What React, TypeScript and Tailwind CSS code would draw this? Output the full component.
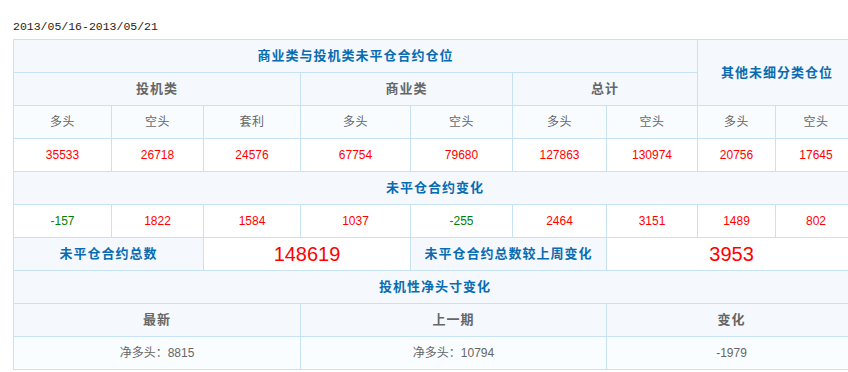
import React from 'react';

type Cell = {
    text: string;
    span?: number;
    rowSpan?: number;
    tone: 'title' | 'head' | 'label' | 'red' | 'green' | 'big' | 'plain';
    bg: 'head' | 'light' | 'white' | 'soft';
};

const bgClass = {
    head: 'bg-[#f5f9fe]',
    light: 'bg-[#f8fcff]',
    white: 'bg-white',
    soft: 'bg-[#fafdff]',
};

const toneClass = {
    title: 'text-[13px] font-bold tracking-[1px] text-[#0a6cb0]',
    head: 'text-[13px] font-bold tracking-[1px] text-[#666]',
    label: 'text-[12px] tracking-[0.5px] text-[#666]',
    red: 'text-[12px] text-[#ff0000]',
    green: 'text-[12px] text-[#008000]',
    big: 'text-[20px] text-[#ff0000]',
    plain: 'text-[12px] text-[#666]',
};

const num = (v: number): Cell => ({ text: String(v), tone: v < 0 ? 'green' : 'red', bg: 'white' });
const lab = (t: string): Cell => ({ text: t, tone: 'label', bg: 'light' });

const rows: Cell[][] = [
    [
        { text: '商业类与投机类未平仓合约仓位', span: 7, tone: 'title', bg: 'head' },
        { text: '其他未细分类仓位', span: 2, rowSpan: 2, tone: 'title', bg: 'head' },
    ],
    [
        { text: '投机类', span: 3, tone: 'head', bg: 'head' },
        { text: '商业类', span: 2, tone: 'head', bg: 'head' },
        { text: '总计', span: 2, tone: 'head', bg: 'head' },
    ],
    ['多头', '空头', '套利', '多头', '空头', '多头', '空头', '多头', '空头'].map(lab),
    [35533, 26718, 24576, 67754, 79680, 127863, 130974, 20756, 17645].map(num),
    [{ text: '未平仓合约变化', span: 9, tone: 'title', bg: 'head' }],
    [-157, 1822, 1584, 1037, -255, 2464, 3151, 1489, 802].map(num),
    [
        { text: '未平仓合约总数', span: 2, tone: 'title', bg: 'head' },
        { text: '148619', span: 2, tone: 'big', bg: 'white' },
        { text: '未平仓合约总数较上周变化', span: 2, tone: 'title', bg: 'head' },
        { text: '3953', span: 3, tone: 'big', bg: 'white' },
    ],
    [{ text: '投机性净头寸变化', span: 9, tone: 'title', bg: 'head' }],
    [
        { text: '最新', span: 3, tone: 'head', bg: 'head' },
        { text: '上一期', span: 3, tone: 'head', bg: 'head' },
        { text: '变化', span: 3, tone: 'head', bg: 'head' },
    ],
    [
        { text: '净多头：8815', span: 3, tone: 'plain', bg: 'soft' },
        { text: '净多头：10794', span: 3, tone: 'plain', bg: 'soft' },
        { text: '-1979', span: 3, tone: 'plain', bg: 'soft' },
    ],
];

// column widths, left to right
const cols = ['w-[98px]', 'w-[92px]', 'w-[97px]', 'w-[110px]', 'w-[102px]', 'w-[94px]', 'w-[91px]', 'w-[78px]', 'w-[81px]'];

export default function App() {
    return (
        <div className="w-[848px] h-[372px] overflow-hidden bg-white pl-[13px] font-['Liberation_Sans','Noto_Sans_CJK_SC',sans-serif]">
            <div className="h-[39px] pt-[20px] text-[11.5px] leading-[14px] text-[#222] font-['Liberation_Mono',monospace]">
                2013/05/16-2013/05/21
            </div>
            <table className="table-fixed border-collapse w-[843px]">
                <colgroup>
                    {cols.map((w, i) => (
                        <col key={i} className={w} />
                    ))}
                </colgroup>
                <tbody>
                    {rows.map((row, ri) => (
                        <tr key={ri} className="h-[33px]">
                            {row.map((c, ci) => (
                                <td
                                    key={ci}
                                    colSpan={c.span}
                                    rowSpan={c.rowSpan}
                                    className={`border border-[#c7e2f4] p-0 text-center align-middle leading-[16px] whitespace-nowrap ${bgClass[c.bg]} ${toneClass[c.tone]}`}
                                >
                                    {c.text}
                                </td>
                            ))}
                        </tr>
                    ))}
                </tbody>
            </table>
        </div>
    );
}
